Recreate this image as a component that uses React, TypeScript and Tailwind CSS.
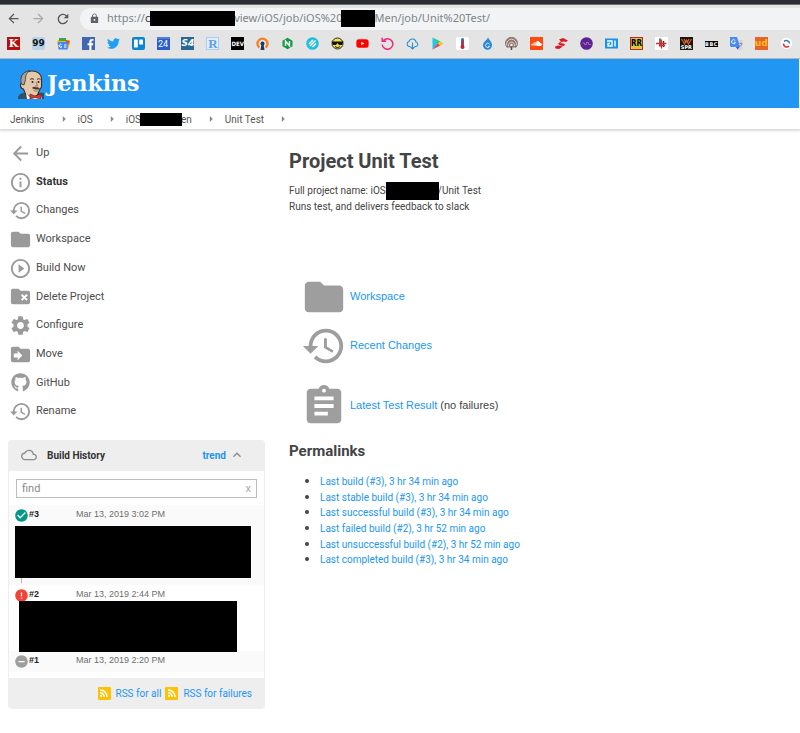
import React from "react";
import {
  MdArrowBack,
  MdArrowForward,
  MdRefresh,
  MdLock,
  MdInfoOutline,
  MdHistory,
  MdFolder,
  MdPlayCircleOutline,
  MdSettings,
  MdAssignment,
  MdCloudQueue,
  MdKeyboardArrowUp,
  MdCheckCircle,
  MdError,
  MdRemoveCircle,
  MdArrowRight,
  MdRssFeed,
} from "react-icons/md";
import { FaGithub, FaTwitter, FaFacebookF, FaYoutube, FaSoundcloud } from "react-icons/fa";

function FolderRemove({ className }: { className?: string }) {
  return (
    <svg viewBox="0 0 24 24" fill="currentColor" className={className} aria-hidden="true">
      <path d="M10,4H4C2.89,4 2,4.89 2,6V18A2,2 0 0,0 4,20H20A2,2 0 0,0 22,18V8C22,6.89 21.1,6 20,6H12L10,4M12.46,10.88L13.88,9.46L16,11.59L18.12,9.46L19.54,10.88L17.41,13L19.54,15.12L18.12,16.54L16,14.41L13.88,16.54L12.46,15.12L14.59,13L12.46,10.88Z" />
    </svg>
  );
}

function FolderMove({ className }: { className?: string }) {
  return (
    <svg viewBox="0 0 24 24" fill="currentColor" className={className} aria-hidden="true">
      <path
        fillRule="evenodd"
        d="M9,18V15H5V11H9V8L14,13L9,18M20,6H12L10,4H4C2.89,4 2,4.89 2,6V18A2,2 0 0,0 4,20H20A2,2 0 0,0 22,18V8C22,6.89 21.1,6 20,6Z"
      />
    </svg>
  );
}

function Butler() {
  return (
    <svg viewBox="0 0 26 29" className="mt-[2px] h-[29px] w-[26px]" aria-hidden="true">
      <path d="M0 29c0-3 1-5 5-6l9-1 12 1v6z" fill="#335061" />
      <path d="M5 14c-2-1-3 0-2.500 2s1.500 3 3 3l2 5 7 4 5-3 2-5 2-3v-8c0-5-4-8-9.500-8S4 4 3.500 8z" fill="#e3c9ab" stroke="#3a2f2b" strokeWidth="1.100" />
      <path d="M3.500 14C1.500 8 4 1.500 12 .700 8 3 7.500 6 7.500 9.500L6 15z" fill="#a9a49c" stroke="#3a2f2b" strokeWidth="0.800" />
      <path d="M12 9.500c1-1 3-1 4 0M19 9.500c1-1 2.500-1 3.500 0" stroke="#3a2f2b" strokeWidth="1" fill="none" />
      <circle cx="14.500" cy="12" r="1" fill="#2b2220" />
      <circle cx="20.500" cy="12" r="1" fill="#2b2220" />
      <path d="M18 12l1.500 4h-2.500" stroke="#7d5c48" strokeWidth="0.700" fill="none" />
      <path d="M14 18c2-2 3-1 4-.5 1.500-.5 3 0 4 1.500-3 1-6 .5-8-1z" fill="#4b362e" />
      <path d="M15.500 20.500c2 .8 3.500.8 4.500.3" stroke="#7d5c48" strokeWidth="0.8" fill="none" />
      <path d="M8 23l5 5 5-1 5-2 1 4H9z" fill="#f5f5f5" />
      <path d="M12 24l5 2 6-2v5l-6-1.500-5 1.500z" fill="#d33833" stroke="#6d1513" strokeWidth="0.600" />
    </svg>
  );
}

function Tile({ className, children }: { className: string; children?: React.ReactNode }) {
  return (
    <span className={"flex size-[13px] items-center justify-center overflow-hidden leading-none " + className}>
      {children}
    </span>
  );
}

const S = "size-[13px]";

const bookmarks: { name: string; icon: React.ReactNode }[] = [
  { name: "K", icon: <Tile className="bg-[#b80d0d] font-['DejaVu_Serif'] text-[11px] font-bold text-white">K</Tile> },
  { name: "99", icon: <Tile className="rounded-xs bg-[#b5d3ea] font-['DejaVu_Sans'] text-[9px] font-bold text-[#111]">99</Tile> },
  {
    name: "News",
    icon: (
      <svg viewBox="0 0 13 13" className={S}>
        <path d="M1 3h11l1 3-2 6H2L0 6z" fill="#f4b400" />
        <path d="M2 1h7v3H2z" fill="#34a853" />
        <path d="M8 3l5 1-2 4z" fill="#ea4335" />
        <path d="M1 5h10l-.500 7.500H1.500z" fill="#4285f4" />
        <path d="M4.500 7.500a1.500 1.500 0 1 0 .5 2h-1M7 8h2.500M7 10h2.500" stroke="#fff" fill="none" />
      </svg>
    ),
  },
  { name: "Facebook", icon: <Tile className="bg-[#4267b2] text-white"><FaFacebookF className="mt-0.5 ml-1 size-[11px]" /></Tile> },
  { name: "Twitter", icon: <FaTwitter className="size-[13px] text-[#1da1f2]" /> },
  {
    name: "Board",
    icon: (
      <svg viewBox="0 0 13 13" className={S}>
        <rect width="13" height="13" rx="2" fill="#0a85d1" />
        <rect x="2" y="2.500" width="3.800" height="8" rx=".6" fill="#fff" />
        <rect x="7.200" y="2.500" width="3.800" height="5" rx=".6" fill="#fff" />
      </svg>
    ),
  },
  { name: "24", icon: <Tile className="border-t-2 border-[#4f7de0] bg-[#2a5bd0] font-['Roboto'] text-[9px] text-white">24</Tile> },
  { name: "S4", icon: <Tile className="bg-[#2b6994] font-['DejaVu_Sans'] text-[9px] font-bold text-white italic">S4</Tile> },
  { name: "R", icon: <Tile className="border border-[#a9cdf3] bg-[#e3eefa] font-['Liberation_Serif'] text-[13px] font-bold text-[#5c9de6]">R</Tile> },
  { name: "DEV", icon: <Tile className="bg-black font-['DejaVu_Sans_Condensed'] text-[6px] font-bold text-white">DEV</Tile> },
  {
    name: "VPN",
    icon: (
      <svg viewBox="0 0 13 13" className={S}>
        <path d="M3.300 10.500A5 5 0 1 1 9.700 10.500" fill="none" stroke="#f5821f" strokeWidth="2.400" />
        <circle cx="6.500" cy="6.500" r="2" fill="#1a3967" />
        <path d="M5.500 7h2l1 6h-4z" fill="#1a3967" />
      </svg>
    ),
  },
  {
    name: "Nginx",
    icon: (
      <svg viewBox="0 0 13 13" className={S}>
        <path d="M6.500.800l5 2.850v5.700l-5 2.850-5-2.850v-5.700z" fill="#139a43" />
        <path d="M4.500 9V4.200L8.500 8.800V4" fill="none" stroke="#fff" strokeWidth="1.400" />
      </svg>
    ),
  },
  {
    name: "Stripes",
    icon: (
      <svg viewBox="0 0 13 13" className={S}>
        <circle cx="6.500" cy="6.500" r="6.300" fill="#20bfdc" />
        <path d="M3 7l4-4M4 9l5.500-5.500M6.500 10L10 6.500" stroke="#fff" strokeWidth="1.500" />
      </svg>
    ),
  },
  {
    name: "Cool",
    icon: (
      <svg viewBox="0 0 13 13" className={S}>
        <circle cx="6.500" cy="6.500" r="5.500" fill="#f4e04d" stroke="#2a2a20" strokeWidth="1" />
        <path d="M.5 4.500h12l-.5 1-1 2.500H8L6.500 6 5 8H2L1 5.500z" fill="#111" />
        <path d="M4 9.500c1.500 1.300 3.500 1.300 5 0" stroke="#111" fill="none" />
      </svg>
    ),
  },
  { name: "YouTube", icon: <FaYoutube className="size-[13px] text-[#f00]" /> },
  {
    name: "Reload",
    icon: (
      <svg viewBox="0 0 13 13" className={S}>
        <path d="M2.500 3.500A5.300 5.300 0 1 1 1.200 7.500M1.200.800v3.500h4" fill="none" stroke="#f0267d" strokeWidth="1.500" />
      </svg>
    ),
  },
  {
    name: "Cloud",
    icon: (
      <svg viewBox="0 0 13 13" className={S}>
        <path d="M4.500 9.500H3A2.600 2.600 0 0 1 3 4.500a3.600 3.600 0 0 1 7 .5 2.300 2.300 0 0 1 0 4.500H8.500M6.500 5.500v6.500M4.500 10l2 2 2-2" fill="none" stroke="#2d8fd8" strokeWidth="1.100" />
      </svg>
    ),
  },
  {
    name: "Play",
    icon: (
      <svg viewBox="0 0 13 13" className={S}>
        <path d="M1.500.500l6 6-6 6z" fill="#1fc4f4" />
        <path d="M1.500.500l8 4-2.500 2.300z" fill="#22d07a" />
        <path d="M1.500 12.500l8-4L7 6.200z" fill="#ee4056" />
        <path d="M9 4.200l3.500 2.300L9 8.800 6.800 6.500z" fill="#fbc02d" />
      </svg>
    ),
  },
  {
    name: "Thermometer",
    icon: (
      <svg viewBox="0 0 13 13" className={S}>
        <rect width="13" height="13" rx="2" fill="#fff" />
        <rect x="5" y="1" width="3" height="9" rx="1.500" fill="#3569a8" />
        <path d="M6.500 3v7" stroke="#e0252b" strokeWidth="1.300" />
        <circle cx="6.500" cy="10" r="2" fill="#c8202b" />
      </svg>
    ),
  },
  {
    name: "Drop",
    icon: (
      <svg viewBox="0 0 13 13" className={S}>
        <path d="M7 .300C8 3 11 5 11 8.200a4.500 4.500 0 0 1-9 0C2 5 6 3.500 7 .300z" fill="#2c84d6" />
        <path d="M8.500 7a2.200 2.200 0 1 0 .3 2.300H7" fill="none" stroke="#d8ecff" strokeWidth="1" />
      </svg>
    ),
  },
  {
    name: "Podcast",
    icon: (
      <svg viewBox="0 0 13 13" className={S}>
        <path d="M2.200 10.500a6 6 0 1 1 8.600 0" fill="#8f766c" stroke="#8f766c" />
        <path d="M1.800 8.500a4.900 4.900 0 1 1 9.400 0M3.700 9.200a3 3 0 1 1 5.600 0" fill="none" stroke="#e4e0dd" strokeWidth=".9" />
        <circle cx="6.500" cy="8" r="1.300" fill="#f0eae7" />
        <path d="M6.500 9.500v3.500" stroke="#5c463d" strokeWidth="1.500" />
      </svg>
    ),
  },
  { name: "SoundCloud", icon: <Tile className="bg-[#ff4a0d] text-white"><FaSoundcloud className="size-[11px]" /></Tile> },
  {
    name: "Red wave",
    icon: (
      <svg viewBox="0 0 13 13" className={S}>
        <path d="M4 2.500l4-1.500 5 2.500-2 1.500-3-.5-3 1.500 5 1L9 9 5 8.500 3 6.500l3-2zM0 9.500L3 8.500l5 1L4 12l-3.500-.5z" fill="#dc1a26" />
      </svg>
    ),
  },
  {
    name: "Purple",
    icon: (
      <svg viewBox="0 0 13 13" className={S}>
        <circle cx="6.500" cy="6.500" r="6.300" fill="#5e2390" />
        <path d="M2.500 6h2v1.500h2V5.500h2V7.500H11" fill="none" stroke="#a77fc9" strokeWidth=".8" />
      </svg>
    ),
  },
  {
    name: "DI",
    icon: (
      <svg viewBox="0 0 13 13" className={S}>
        <rect y="1.500" width="13" height="10" fill="#1793ea" />
        <path d="M2 4h5v5H3V6.500h2M10 3.500v6" fill="none" stroke="#fff" strokeWidth="1.400" />
      </svg>
    ),
  },
  { name: "RR", icon: <Tile className="border border-[#b52a2c] bg-[#d9c93a] font-['DejaVu_Sans_Condensed'] text-[8px] font-bold text-black">RR</Tile> },
  {
    name: "Cross",
    icon: (
      <svg viewBox="0 0 13 13" className={S}>
        <rect width="13" height="13" fill="#fff" />
        <path d="M5 1.500v8M8.500 4v6" stroke="#333" strokeWidth="1.400" />
        <path d="M1 6.500h10.500M6.500 2.500v9M4 8.500h6" stroke="#d92d2d" strokeWidth="1.300" />
      </svg>
    ),
  },
  {
    name: "WSPR",
    icon: (
      <Tile className="flex-col bg-[#181513] font-['DejaVu_Sans'] text-[5px] font-bold text-white">
        <svg viewBox="0 0 13 7" className="h-[7px] w-[13px]">
          <path d="M1.500 1l3 5 2-4 2 4 3-5M4 1l2 4M9 1L7 5" fill="none" stroke="#d9652c" strokeWidth="1.100" />
        </svg>
        <span>SPR</span>
      </Tile>
    ),
  },
  {
    name: "BBC",
    icon: (
      <span className="grid h-[6px] w-[13px] grid-cols-3 bg-black text-center font-['DejaVu_Sans'] text-[5px] leading-[6px] font-bold text-white">
        <span>B</span>
        <span>B</span>
        <span>C</span>
      </span>
    ),
  },
  {
    name: "Translate",
    icon: (
      <svg viewBox="0 0 13 13" className={S}>
        <path d="M5 3h7.500v10H8z" fill="#d3d5d8" />
        <path d="M0 0h7l3 10H1L0 9z" fill="#4a8af4" />
        <path d="M6 10h3.500L7.500 12.500z" fill="#2a5bc4" />
        <path d="M5.200 3.500a2 2 0 1 0 .3 1.800H4" fill="none" stroke="#fff" strokeWidth=".9" />
        <path d="M9.500 6.500h3M11 5.500v1M12 7L9.500 10" fill="none" stroke="#777d85" strokeWidth=".7" />
      </svg>
    ),
  },
  { name: "ud", icon: <Tile className="bg-[#e8622a] font-['DejaVu_Sans'] text-[9px] font-bold text-[#ffc21c]">ud</Tile> },
  {
    name: "Sync",
    icon: (
      <svg viewBox="0 0 13 13" className={S}>
        <circle cx="6.500" cy="6.500" r="5.800" fill="#fff" />
        <path d="M4 4.500A3.200 3.200 0 0 1 9.500 6.500" fill="none" stroke="#3b79b8" strokeWidth="1.600" />
        <path d="M9 9A3.200 3.200 0 0 1 3.500 6.500" fill="none" stroke="#e3343a" strokeWidth="1.600" />
      </svg>
    ),
  },
];

function Redacted({ className }: { className: string }) {
  return <span className={"relative inline-block shrink-0 bg-black " + className} />;
}

const tasks = [
  { label: "Up", Icon: MdArrowBack },
  { label: "Status", Icon: MdInfoOutline, active: true },
  { label: "Changes", Icon: MdHistory },
  { label: "Workspace", Icon: MdFolder },
  { label: "Build Now", Icon: MdPlayCircleOutline },
  { label: "Delete Project", Icon: FolderRemove },
  { label: "Configure", Icon: MdSettings },
  { label: "Move", Icon: FolderMove },
  { label: "GitHub", Icon: FaGithub, small: true },
  { label: "Rename", Icon: MdHistory },
];

const permalinks = [
  "Last build (#3), 3 hr 34 min ago",
  "Last stable build (#3), 3 hr 34 min ago",
  "Last successful build (#3), 3 hr 34 min ago",
  "Last failed build (#2), 3 hr 52 min ago",
  "Last unsuccessful build (#2), 3 hr 52 min ago",
  "Last completed build (#3), 3 hr 34 min ago",
];

function BrowserChrome() {
  return (
    <div className="border-b border-[#b4b4b4] bg-[#e4e4e4]">
      <div className="h-[5px] border-b border-[#6c7073] bg-[#2b2f33]" />
      <div className="flex h-[25px] items-center pt-[2px]">
        <div className="flex w-20 items-center justify-between pr-[9px] pl-[6px]">
          <button type="button" aria-label="Back" className="text-[#55585c]"><MdArrowBack className="size-[15px]" /></button>
          <button type="button" aria-label="Forward" className="text-[#a5a7a9]"><MdArrowForward className="size-[15px]" /></button>
          <button type="button" aria-label="Reload" className="text-[#55585c]"><MdRefresh className="size-[16px]" /></button>
        </div>
        <div className="flex h-[22px] min-w-0 flex-1 items-center rounded-l-full bg-[#f1f3f4] pl-[9px] font-['Noto_Sans',sans-serif] text-[11px] whitespace-nowrap text-[#80858a]">
          <MdLock className="mr-[7px] size-[11px] shrink-0 text-[#5f6368]" />
          <span>https://<span className="text-[#333]">c</span></span>
          <Redacted className="h-[15px] w-[85px]" />
          <span className="-ml-px">view/iOS/job/iOS%20</span>
          <Redacted className="-ml-px h-[17px] w-[34px]" />
          <span className="-ml-px">Men/job/Unit%20Test/</span>
        </div>
      </div>
      <nav aria-label="Bookmarks" className="flex h-7 items-center justify-between px-[7px] pb-px">
        {bookmarks.map((b) => (
          <a key={b.name} href="#" aria-label={b.name} className="block">
            {b.icon}
          </a>
        ))}
      </nav>
    </div>
  );
}

function Crumb({ children }: { children: React.ReactNode }) {
  return (
    <li className="flex items-center">
      <a href="#" className="flex items-center">{children}</a>
      <MdArrowRight className="mr-[7px] ml-3 size-[14px] text-[#8a8a8a]" />
    </li>
  );
}

function TaskList() {
  return (
    <ul className="grid h-[287px] grid-rows-10">
      {tasks.map(({ label, Icon, active, small }) => (
        <li key={label} className="flex pl-px">
          <a href="#" className={"flex items-center pt-[2px] text-[11px] " + (active ? "font-bold text-[#333]" : "text-[#4d4d4d]")}>
            <span className="mr-1 flex size-[23px] items-center justify-center text-[#9a9a9a]">
              <Icon className={small ? "size-[19px]" : "size-[23px] shrink-0"} />
            </span>
            {label}
          </a>
        </li>
      ))}
    </ul>
  );
}

function BuildRow({ id, date, icon, className, children }: { id: string; date: string; icon: React.ReactNode; className: string; children?: React.ReactNode }) {
  return (
    <li className={className}>
      <div className="flex h-[18px] items-start pl-[5px] font-['Liberation_Sans',sans-serif] text-[9px] leading-[18px]">
        <span className="mt-[3px] shrink-0">{icon}</span>
        <a href="#" className="w-[47px] font-bold text-[#222]">{id}</a>
        <a href="#" className="text-[#6e6e6e]">{date}</a>
      </div>
      {children}
    </li>
  );
}

function BuildHistory() {
  return (
    <section className="mr-2 overflow-hidden rounded-[3px] border border-[#eee]">
      <header className="flex h-[30px] items-center bg-[#eee] pr-[19px] pb-[2px] pl-3 text-[10px] font-bold text-[#333]">
        <MdCloudQueue className="mr-[10px] size-4 text-[#8c8c8c]" />
        <h2>Build History</h2>
        <a href="#" className="ml-auto text-[#2196f3]">trend</a>
        <MdKeyboardArrowUp className="ml-[3px] size-4 text-[#8c8c8c]" />
      </header>
      <div className="px-[7px] pt-2 pb-[7px]">
        <div className="flex h-[19px] items-center border border-[#bdbdbd] bg-white px-[5px] pt-px text-[11px] text-[#8a8a8a]">
          <input aria-label="Find build" placeholder="find" className="min-w-0 flex-1 outline-none placeholder:text-[#8a8a8a]" />
          <button type="button" aria-label="Clear" className="text-[#aaa]">x</button>
        </div>
      </div>
      <ul>
        <BuildRow id="#3" date="Mar 13, 2019 3:02 PM" className="h-20 bg-[#fafafa]" icon={<MdCheckCircle className="size-[15px] text-[#009688]" />}>
          <div className="mt-[3px] mr-[13px] ml-[6px] h-[52px] bg-black" />
          <div className="ml-3 h-[5px] w-px bg-[#b5b5b5]" />
        </BuildRow>
        <BuildRow id="#2" date="Mar 13, 2019 2:44 PM" className="h-[66px]" icon={<MdError className="size-[15px] text-[#f44336]" />}>
          <div className="relative -mt-[2px] mr-[27px] ml-[10px] h-[51px] bg-black" />
        </BuildRow>
        <BuildRow id="#1" date="Mar 13, 2019 2:20 PM" className="h-[21px] bg-[#fafafa]" icon={<MdRemoveCircle className="size-[15px] text-[#9e9e9e]" />} />
      </ul>
      <footer className="mt-[6px] flex h-[30px] items-center justify-end bg-[#eee] pr-3 text-[10px] text-[#2196f3]">
        {["RSS for all", "RSS for failures"].map((t) => (
          <a key={t} href="#" className="ml-1 flex items-center">
            <span className="mr-[5px] flex size-[13px] items-center justify-center rounded-[1px] bg-[#ffc107] text-white">
              <MdRssFeed className="size-[12px]" />
            </span>
            {t}
          </a>
        ))}
      </footer>
    </section>
  );
}

function ProjectLink({ Icon, label, note, className }: { Icon: React.ComponentType<{ className?: string }>; label: string; note?: string; className: string }) {
  return (
    <li className={"flex items-center " + className}>
      <Icon className="mr-[3px] size-[46px] text-[#9e9e9e]" />
      <span>
        <a href="#" className="text-[#2196f3]">{label}</a>
        {note ? " " + note : ""}
      </span>
    </li>
  );
}

export default function App() {
  return (
    <div className="bg-white font-['Roboto',sans-serif] text-[#444]">
      <BrowserChrome />
      <div className="mr-px flex h-[49px] items-center bg-[#2196f3] pl-[18px] font-['DejaVu_Serif',serif] text-[22px] font-bold text-white">
        <a href="#" className="flex items-center">
          <Butler />
          <span className="ml-[3px] pb-px">Jenkins</span>
        </a>
      </div>
      <nav aria-label="Breadcrumb" className="mb-2 h-[22px] border-b border-[#ddd] shadow-[0_1px_2px_rgba(0,0,0,0.15)]">
        <ol className="flex h-[21px] items-center pt-px pl-[10px] text-[10px] text-[#555]">
          <Crumb>Jenkins</Crumb>
          <Crumb>iOS</Crumb>
          <Crumb>iOS<Redacted className="-ml-px h-[13px] w-[42px]" /><span className="-ml-px">en</span></Crumb>
          <Crumb>Unit Test</Crumb>
        </ol>
      </nav>
      <div className="flex pl-2">
        <aside className="w-[265px] shrink-0">
          <TaskList />
          <div className="h-[15px]" />
          <BuildHistory />
        </aside>
        <main className="min-w-0 flex-1 pl-4">
          <h1 className="pt-[9px] text-[20px] leading-7 font-bold">Project Unit Test</h1>
          <div className="mt-2 text-[10px] leading-4">
            <p className="flex h-4 items-center">
              Full project name: iOS
              <Redacted className="h-[18px] w-[53px]" />
              <span className="-ml-px">/Unit Test</span>
            </p>
            <p>Runs test, and delivers feedback to slack</p>
          </div>
          <ul className="mt-[57px] pl-3 font-['Liberation_Sans',sans-serif] text-[11px]">
            <ProjectLink Icon={MdFolder} label="Workspace" className="h-[49px]" />
            <ProjectLink Icon={MdHistory} label="Recent Changes" className="h-[49px]" />
            <ProjectLink Icon={MdAssignment} label="Latest Test Result" note="(no failures)" className="mt-[11px] h-[49px]" />
          </ul>
          <h2 className="mt-[11px] text-[15px] leading-5 font-bold">Permalinks</h2>
          <ul className="mt-3 grid h-[94px] list-disc grid-rows-6 pl-[31px] text-[10px] leading-4 marker:text-[13px]">
            {permalinks.map((p) => (
              <li key={p}><a href="#" className="text-[#2196f3]">{p}</a></li>
            ))}
          </ul>
        </main>
      </div>
    </div>
  );
}
